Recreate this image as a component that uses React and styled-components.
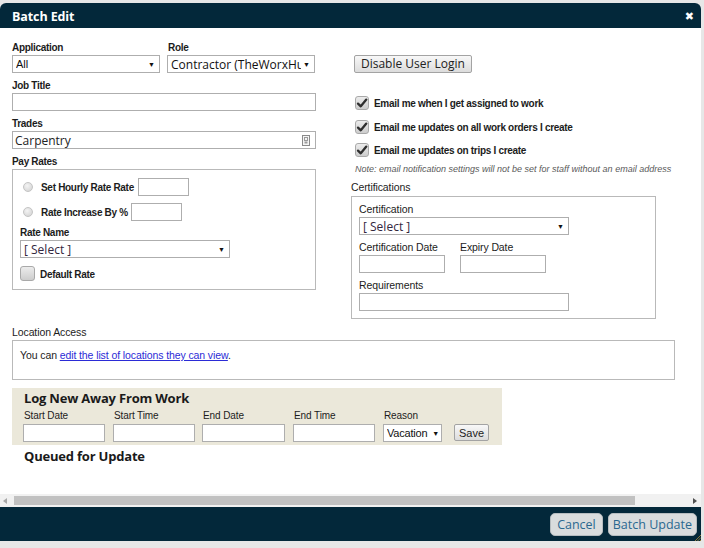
import React from 'react';
import styled, { createGlobalStyle } from 'styled-components';

const Global = createGlobalStyle`
  html, body { margin: 0; padding: 0; }
  body {
    background: #e7e7e7;
    width: 704px;
    height: 548px;
    overflow: hidden;
    font-family: "Liberation Sans", Arial, sans-serif;
  }
  * { box-sizing: border-box; }
`;

const NAVY = '#03283a';
const LABEL_FONT = `"Liberation Sans", Arial, sans-serif`;
const UI_FONT = `"Open Sans", "Noto Sans", sans-serif`;

const Page = styled.div`
  width: 704px;
  height: 548px;
  padding-top: 3px;
  overflow: hidden;
  background: #e7e7e7;
`;

const Dialog = styled.div`
  width: 701px;
  display: flex;
  flex-direction: column;
  background: #fff;
  border-radius: 6px 6px 0 0;
  overflow: hidden;
`;

const TitleBar = styled.div`
  height: 25px;
  background: ${NAVY};
  display: flex;
  align-items: center;
  justify-content: space-between;
  padding: 1px 7px 0 12px;
  color: #fff;
`;

const Title = styled.h1`
  margin: 0;
  font: bold 12.5px ${UI_FONT};
  letter-spacing: -0.1px;
`;

const Close = styled.span`
  font: bold 11px "DejaVu Sans", sans-serif;
  color: #fff;
`;

const Body = styled.div`
  height: 466px;
  padding: 13px 0 0 12px;
  overflow: hidden;
`;

const TopGrid = styled.div`
  display: grid;
  grid-template-columns: 304px 305px;
  column-gap: 35px;
  align-items: start;
`;

const Column = styled.div`
  display: flex;
  flex-direction: column;
`;

const Group = styled.div`
  display: flex;
  flex-direction: column;
  margin-bottom: ${(p) => p.$mb ?? 6}px;
`;

const Label = styled.div`
  font: bold 10px ${LABEL_FONT};
  letter-spacing: -0.3px;
  line-height: 13px;
  height: 13px;
  color: #1c1c1c;
  margin-bottom: 1px;
  padding-left: ${(p) => p.$indent ?? 0}px;
  white-space: nowrap;
`;

const TextInput = styled.div`
  width: ${(p) => (p.$w ? `${p.$w}px` : '100%')};
  height: 18px;
  border: 1px solid #aeaeae;
  background: #fff;
  display: flex;
  align-items: center;
  justify-content: space-between;
  padding: 0 5px 0 2px;
  font: 12px ${UI_FONT};
  color: #222;
`;

const Select = styled.div`
  width: ${(p) => (p.$w ? `${p.$w}px` : '100%')};
  height: 18px;
  border: 1px solid #aeaeae;
  background: #fff;
  display: flex;
  align-items: center;
  padding: 0 ${(p) => (p.$tight ? 2 : 4)}px 0 3px;
  font: ${(p) => (p.$narrow ? `11px ${LABEL_FONT}` : `12px ${UI_FONT}`)};
  letter-spacing: ${(p) => (p.$tight ? '-0.2px' : '0')};
  color: ${(p) => (p.$muted ? '#33263d' : '#111')};
  white-space: nowrap;
`;

const SelectText = styled.span`
  flex: 1;
  overflow: hidden;
  white-space: nowrap;
`;

const Arrow = styled.span`
  font-size: 7px;
  color: #111;
  margin-left: 2px;
  flex: none;
`;

const Row = styled.div`
  display: flex;
  gap: ${(p) => p.$gap ?? 7}px;
`;

const Fieldset = styled.div`
  border: 1px solid #b9b9b9;
  padding: ${(p) => p.$pad};
  display: flex;
  flex-direction: column;
`;

const RadioRow = styled.div`
  display: flex;
  align-items: center;
  height: 18px;
  margin-bottom: ${(p) => p.$mb ?? 0}px;
`;

const Radio = styled.span`
  width: 10px;
  height: 10px;
  border-radius: 50%;
  border: 1px solid #c4c4c4;
  background: radial-gradient(circle at 40% 35%, #f4f4f4, #cfcfcf);
  margin: 0 8px 0 3px;
  flex: none;
`;

const InlineLabel = styled.span`
  font: bold 10px ${LABEL_FONT};
  letter-spacing: -0.3px;
  color: #1c1c1c;
  margin-right: ${(p) => p.$mr ?? 4}px;
  margin-left: ${(p) => p.$ml ?? 0}px;
  margin-top: ${(p) => p.$mt ?? 0}px;
  white-space: nowrap;
`;

const CheckRow = styled.div`
  display: flex;
  align-items: center;
  height: ${(p) => p.$h ?? 16}px;
  margin-bottom: ${(p) => p.$mb ?? 0}px;
  padding-left: ${(p) => p.$indent ?? 0}px;
`;

const Box = styled.span`
  width: ${(p) => p.$size}px;
  height: ${(p) => p.$size}px;
  border-radius: 3px;
  border: 1px solid #a9a9a9;
  background: linear-gradient(#ececec, #cdcdcd);
  display: inline-flex;
  align-items: center;
  justify-content: center;
  flex: none;
`;

const Button = styled.button`
  height: 18px;
  padding: 0 6px;
  border: 1px solid #a3a3a3;
  border-radius: 2px;
  background: linear-gradient(#f8f8f8, #dcdcdc);
  font: 12px ${UI_FONT};
  color: #222;
  line-height: 14px;
  margin-left: ${(p) => p.$ml ?? 0}px;
  cursor: pointer;
`;

const Spacer = styled.div`
  height: ${(p) => p.$h}px;
`;

const Note = styled.div`
  font: italic 9px ${LABEL_FONT};
  line-height: 12px;
  color: #5a5a5a;
  padding-left: 4px;
  white-space: nowrap;
  margin-bottom: 6px;
`;

const CertLabel = styled.div`
  font: 10.5px ${LABEL_FONT};
  letter-spacing: -0.1px;
  line-height: 13px;
  height: 13px;
  color: #1c1c1c;
  margin-bottom: ${(p) => p.$mb ?? 1}px;
  white-space: nowrap;
`;

const LocationBox = styled.div`
  width: 663px;
  height: 40px;
  border: 1px solid #b9b9b9;
  padding: 8px 7px;
  font: 10.5px ${LABEL_FONT};
  letter-spacing: -0.1px;
  line-height: 13px;
  color: #1c1c1c;
  margin-bottom: 8px;
`;

const Link = styled.a`
  color: #2b2bd6;
  text-decoration: underline;
`;

const AwayPanel = styled.div`
  width: 490px;
  height: 57px;
  background: #ebe8da;
  padding: 2px 11px 3px;
  display: flex;
  flex-direction: column;
`;

const SectionTitle = styled.div`
  font: bold 13px ${UI_FONT};
  line-height: 16px;
  color: #1a1a1a;
  letter-spacing: -0.2px;
  margin: ${(p) => p.$m ?? 0};
`;

const AwayRow = styled.div`
  display: flex;
  align-items: flex-end;
  gap: 8px;
  margin-top: 3px;
`;

const AwayField = styled.div`
  display: flex;
  flex-direction: column;
  width: ${(p) => p.$w}px;
  margin-left: ${(p) => p.$ml ?? 0}px;
`;

const AwayLabel = styled.div`
  font: 10px ${LABEL_FONT};
  letter-spacing: -0.1px;
  line-height: 13px;
  color: #1c1c1c;
  padding-left: 1px;
  margin-bottom: 2px;
  white-space: nowrap;
`;

const SaveButton = styled.button`
  height: 17px;
  width: 35px;
  margin-left: 4px;
  margin-bottom: 1px;
  padding: 0;
  border: 1px solid #a3a3a3;
  border-radius: 2px;
  background: linear-gradient(#f8f8f8, #dcdcdc);
  font: 11px ${LABEL_FONT};
  color: #222;
`;

const ScrollBar = styled.div`
  height: 13px;
  background: #f1f1f1;
  display: flex;
  align-items: center;
  padding: 0 4px 0 3px;
`;

const ScrollThumb = styled.div`
  height: 9px;
  width: 621px;
  margin-left: 7px;
  background: #c1c1c1;
`;

const ScrollArrow = styled.span`
  width: 0;
  height: 0;
  border-top: 3px solid transparent;
  border-bottom: 3px solid transparent;
  ${(p) =>
    p.$dir === 'left'
      ? 'border-right: 4px solid #a8a8a8;'
      : 'border-left: 4px solid #505050; margin-left: auto;'}
`;

const Footer = styled.div`
  height: 34px;
  background: ${NAVY};
  display: flex;
  align-items: center;
  justify-content: flex-end;
  gap: 5px;
  padding-right: 4px;
  position: relative;
`;

const FooterButton = styled.button`
  height: 23px;
  padding: 0 ${(p) => p.$px ?? 5}px;
  border: 1px solid #b6bcbf;
  border-radius: 5px;
  background: #d9dcdd;
  color: #2a6890;
  font: 12.5px ${UI_FONT};
  cursor: pointer;
`;

const Grip = styled.svg`
  position: absolute;
  right: 0;
  bottom: 0;
`;

const Check = () => (
  <svg width="12" height="12" viewBox="0 0 12 12">
    <path d="M2 6.6 L4.8 9.3 L10.3 2.6" fill="none" stroke="#2f2f2f" strokeWidth="2.3" strokeLinecap="round" strokeLinejoin="round" />
  </svg>
);

const TagIcon = () => (
  <svg width="8" height="11" viewBox="0 0 8 11">
    <rect x="0.5" y="0.5" width="7" height="10" fill="#f4f4f4" stroke="#8a8a8a" />
    <rect x="2.5" y="2.5" width="3" height="3" fill="none" stroke="#9a9a9a" />
    <rect x="2.5" y="6.5" width="3" height="2" fill="#9a9a9a" />
  </svg>
);

const FakeSelect = ({ children, ...rest }) => (
  <Select {...rest}>
    <SelectText>{children}</SelectText>
    <Arrow>▼</Arrow>
  </Select>
);

export default function App() {
  return (
    <>
      <Global />
      <Page>
        <Dialog>
          <TitleBar>
            <Title>Batch Edit</Title>
            <Close>✖</Close>
          </TitleBar>
          <Body>
            <TopGrid>
              <Column>
                <Row>
                  <Group>
                    <Label>Application</Label>
                    <FakeSelect $w={148} $narrow>All</FakeSelect>
                  </Group>
                  <Group>
                    <Label $indent={1}>Role</Label>
                    <FakeSelect $w={148}>Contractor (TheWorxHu</FakeSelect>
                  </Group>
                </Row>
                <Group>
                  <Label>Job Title</Label>
                  <TextInput />
                </Group>
                <Group>
                  <Label>Trades</Label>
                  <TextInput>
                    Carpentry
                    <TagIcon />
                  </TextInput>
                </Group>
                <Group $mb={0}>
                  <Label>Pay Rates</Label>
                  <Fieldset $pad="8px 7px 7px 7px">
                    <RadioRow $mb={7}>
                      <Radio />
                      <InlineLabel>Set Hourly Rate Rate</InlineLabel>
                      <TextInput $w={51} />
                    </RadioRow>
                    <RadioRow $mb={5}>
                      <Radio />
                      <InlineLabel $mr={3}>Rate Increase By %</InlineLabel>
                      <TextInput $w={51} />
                    </RadioRow>
                    <Group $mb={7}>
                      <Label>Rate Name</Label>
                      <FakeSelect $w={210} $muted>[ Select ]</FakeSelect>
                    </Group>
                    <CheckRow $h={17}>
                      <Box $size={15} />
                      <InlineLabel $ml={5} $mt={2}>Default Rate</InlineLabel>
                    </CheckRow>
                  </Fieldset>
                </Group>
              </Column>

              <Column>
                <Spacer $h={14} />
                <Row>
                  <Button $ml={3}>Disable User Login</Button>
                </Row>
                <Spacer $h={22} />
                <CheckRow $indent={4} $mb={8}>
                  <Box $size={14}><Check /></Box>
                  <InlineLabel $ml={5}>Email me when I get assigned to work</InlineLabel>
                </CheckRow>
                <CheckRow $indent={4} $mb={7}>
                  <Box $size={14}><Check /></Box>
                  <InlineLabel $ml={5}>Email me updates on all work orders I create</InlineLabel>
                </CheckRow>
                <CheckRow $indent={4} $mb={5}>
                  <Box $size={14}><Check /></Box>
                  <InlineLabel $ml={5}>Email me updates on trips I create</InlineLabel>
                </CheckRow>
                <Note>Note: email notification settings will not be set for staff without an email address</Note>
                <CertLabel $mb={2}>Certifications</CertLabel>
                <Fieldset $pad="6px 7px 7px 7px">
                  <Group>
                    <CertLabel>Certification</CertLabel>
                    <FakeSelect $w={210} $muted>[ Select ]</FakeSelect>
                  </Group>
                  <Row $gap={15}>
                    <Group>
                      <CertLabel>Certification Date</CertLabel>
                      <TextInput $w={86} />
                    </Group>
                    <Group>
                      <CertLabel>Expiry Date</CertLabel>
                      <TextInput $w={86} />
                    </Group>
                  </Row>
                  <Group $mb={0}>
                    <CertLabel>Requirements</CertLabel>
                    <TextInput $w={210} />
                  </Group>
                </Fieldset>
              </Column>
            </TopGrid>

            <Spacer $h={7} />
            <CertLabel>Location Access</CertLabel>
            <LocationBox>
              You can <Link href="#">edit the list of locations they can view</Link>.
            </LocationBox>

            <AwayPanel>
              <SectionTitle $m="0 0 0 1px">Log New Away From Work</SectionTitle>
              <AwayRow>
                <AwayField $w={82}>
                  <AwayLabel>Start Date</AwayLabel>
                  <TextInput />
                </AwayField>
                <AwayField $w={82}>
                  <AwayLabel>Start Time</AwayLabel>
                  <TextInput />
                </AwayField>
                <AwayField $w={83} $ml={-1}>
                  <AwayLabel>End Date</AwayLabel>
                  <TextInput />
                </AwayField>
                <AwayField $w={82}>
                  <AwayLabel>End Time</AwayLabel>
                  <TextInput />
                </AwayField>
                <AwayField $w={59}>
                  <AwayLabel>Reason</AwayLabel>
                  <FakeSelect $narrow $tight>Vacation</FakeSelect>
                </AwayField>
                <SaveButton>Save</SaveButton>
              </AwayRow>
            </AwayPanel>
            <SectionTitle $m="3px 0 0 12px">Queued for Update</SectionTitle>
          </Body>
          <ScrollBar>
            <ScrollArrow $dir="left" />
            <ScrollThumb />
            <ScrollArrow $dir="right" />
          </ScrollBar>
          <Footer>
            <FooterButton $px={6}>Cancel</FooterButton>
            <FooterButton $px={4}>Batch Update</FooterButton>
            <Grip width="7" height="7" viewBox="0 0 7 7">
              <path d="M7 1 L1 7 M7 3.5 L3.5 7 M7 6 L6 7" stroke="#b08d3a" strokeWidth="0.8" />
            </Grip>
          </Footer>
        </Dialog>
      </Page>
    </>
  );
}
